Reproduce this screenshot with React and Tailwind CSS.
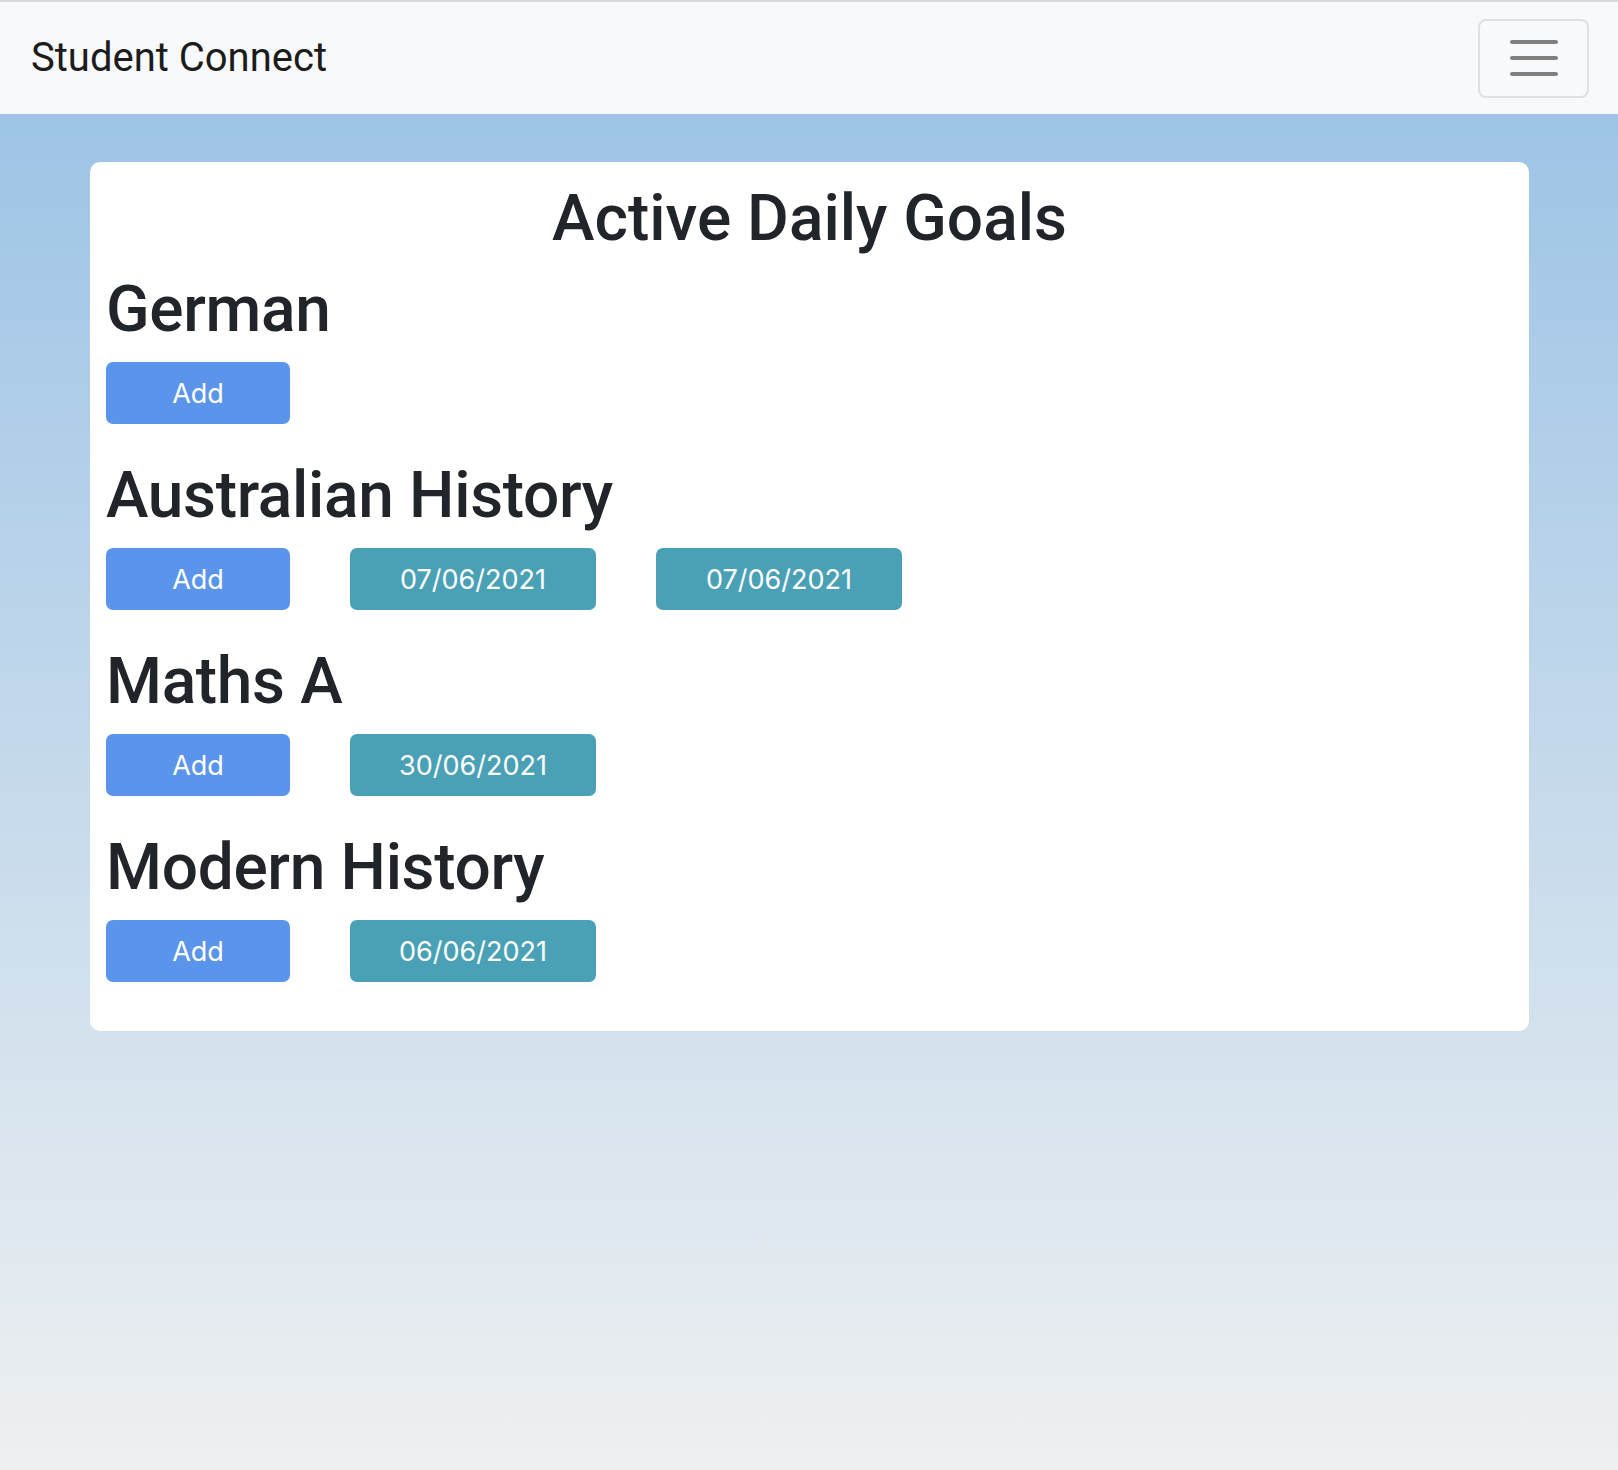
const subjects = [
  { name: "German", dates: [] },
  { name: "Australian History", dates: ["07/06/2021", "07/06/2021"] },
  { name: "Maths A", dates: ["30/06/2021"] },
  { name: "Modern History", dates: ["06/06/2021"] },
];

const headingFont = { fontFamily: "Roboto, 'Liberation Sans', sans-serif" };

function GoalButton({ children, className }) {
  return (
    <button
      className={`h-[62px] rounded-[7px] text-white text-[27px] leading-none flex items-center justify-center ${className}`}
    >
      {children}
    </button>
  );
}

export default function App() {
  return (
    <div
      className="min-h-screen flex flex-col text-[#212529]"
      style={{ fontFamily: "Inter, 'Noto Sans', sans-serif" }}
    >
      {/* navbar */}
      <nav className="h-[114px] border-t-2 border-[#d6d9dd] bg-[#f8f9fa] flex items-center justify-between pl-[31px] pr-[29px]">
        <span className="text-[40px] leading-none text-[#1c1c1c]" style={headingFont}>
          Student Connect
        </span>
        <button className="w-[111px] h-[79px] border-2 border-[#dfe0e1] rounded-[8px] flex flex-col items-center justify-center gap-[12px]">
          <span className="block w-[48px] h-[4px] rounded-full bg-[#808080]" />
          <span className="block w-[48px] h-[4px] rounded-full bg-[#808080]" />
          <span className="block w-[48px] h-[4px] rounded-full bg-[#808080]" />
        </button>
      </nav>

      {/* main */}
      <main className="flex-1 bg-gradient-to-b from-[#9ec4e6] to-[#eef0f1] pl-[90px] pr-[89px] pt-[48px]">
        <div className="bg-white rounded-[10px] px-[16px] pt-[18px] pb-[16px]">
          <h1
            className="text-center text-[64px] leading-[77px] font-medium mb-[14px]"
            style={headingFont}
          >
            Active Daily Goals
          </h1>
          {subjects.map((s) => (
            <section key={s.name} className="mb-[33px]">
              <h2
                className="text-[64px] leading-[77px] font-medium tracking-[-0.005em] mb-[14px]"
                style={headingFont}
              >
                {s.name}
              </h2>
              <div className="flex gap-[60px]">
                <GoalButton className="w-[184px] bg-[#5b95eb]">Add</GoalButton>
                {s.dates.map((d, i) => (
                  <GoalButton key={i} className="w-[246px] bg-[#4aa1b6]">
                    {d}
                  </GoalButton>
                ))}
              </div>
            </section>
          ))}
        </div>
      </main>
    </div>
  );
}
